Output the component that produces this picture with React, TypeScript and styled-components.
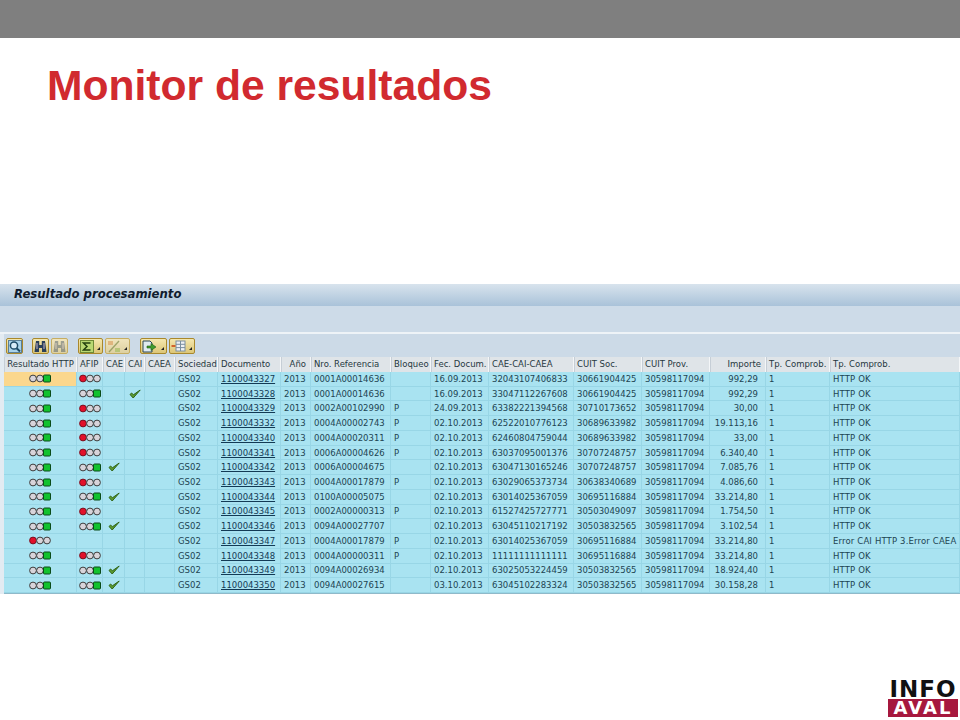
import React from "react";
import styled, { createGlobalStyle } from "styled-components";

const Global = createGlobalStyle`
  html, body { margin: 0; padding: 0; background: #fff; }
  body { font-family: "Liberation Sans", Arial, sans-serif; }
`;

const Page = styled.div`
  width: 960px;
  height: 720px;
  display: flex;
  flex-direction: column;
  overflow: hidden;
  background: #fff;
`;
const TopBar = styled.div`
  height: 38px;
  flex: none;
  background: #7f7f7f;
`;
const Title = styled.h1`
  margin: 0;
  flex: none;
  height: 246px;
  box-sizing: border-box;
  padding: 22px 0 0 47px;
  font: bold 42.6px/50px "Liberation Sans", Arial, sans-serif;
  color: #d12a2f;
`;
const Panel = styled.section`
  flex: none;
  display: flex;
  flex-direction: column;
  border-left: 4px solid #e3ebf2;
`;
const PanelTitle = styled.div`
  height: 22px;
  margin-left: -4px;
  padding: 0 0 2px 14px;
  box-sizing: border-box;
  display: flex;
  align-items: center;
  background: linear-gradient(#d8e3ed, #a9c2d9);
  font: italic bold 11.7px "DejaVu Sans", sans-serif;
  color: #101c2e;
`;
const Band = styled.div`
  height: 26px;
  margin-left: -4px;
  background: #cddbe8;
  border-bottom: 2px solid #eef3f7;
`;
const Toolbar = styled.div`
  height: 23px;
  box-sizing: border-box;
  padding: 4px 0 0;
  display: flex;
  align-items: flex-start;
  background: #ccdae7;
`;
const ToolButton = styled.div<{ $w: number; $faded?: boolean; $gap?: number }>`
  width: ${(p) => p.$w}px;
  height: 16px;
  margin-left: ${(p) => p.$gap ?? 2}px;
  box-sizing: border-box;
  display: flex;
  align-items: center;
  padding-left: 1px;
  position: relative;
  border: 1px solid ${(p) => (p.$faded ? "#c6ad62" : "#a9882c")};
  border-radius: 2px;
  background: ${(p) => (p.$faded ? "linear-gradient(#f0e5bd,#ddd0a0)" : "linear-gradient(#f4e7ae,#dcc677)")};
`;
const DropMark = styled.span`
  position: absolute;
  right: 2px;
  bottom: 3px;
  width: 0;
  height: 0;
  border-left: 3px solid transparent;
  border-bottom: 3px solid #222;
`;
const COLS =
  "73px 26px 22px 20px 30px 43px 63px 30px 80px 40px 58px 85px 68px 68px 56px 64px 1fr";
const HeaderRow = styled.div`
  height: 15px;
  display: grid;
  grid-template-columns: ${COLS};
  background: #dfe4e8;
`;
const HeaderCell = styled.div<{ $right?: boolean; $center?: boolean }>`
  box-sizing: border-box;
  padding: 0 ${(p) => (p.$right ? 4 : 2)}px 0 2px;
  border-right: 1px solid #f4f6f8;
  border-left: 1px solid #c6ced6;
  font: 8.5px/14px "DejaVu Sans", sans-serif;
  color: #26383f;
  white-space: nowrap;
  overflow: hidden;
  text-align: ${(p) => (p.$right ? "right" : p.$center ? "center" : "left")};
`;
const Rows = styled.div`
  height: 221px;
  display: flex;
  flex-direction: column;
  border-bottom: 1px solid #8fb9c9;
`;
const Row = styled.div`
  flex: 1;
  min-height: 0;
  display: grid;
  grid-template-columns: ${COLS};
  background: #a9e3f1;
`;
const Cell = styled.div<{ $right?: boolean; $first?: boolean }>`
  box-sizing: border-box;
  padding: 0 ${(p) => (p.$right ? 7 : 2)}px 0 3px;
  display: flex;
  align-items: center;
  justify-content: ${(p) => (p.$right ? "flex-end" : "flex-start")};
  border-right: 1px solid #98d6e6;
  border-bottom: 1px solid #98d6e6;
  font: 8.5px "DejaVu Sans", sans-serif;
  color: #1d4452;
  white-space: nowrap;
  background: ${(p) => (p.$first ? "#fbd78d" : "transparent")};
`;
const IconCell = styled(Cell)`
  padding: 0;
  justify-content: center;
`;
const MessageCell = styled(Cell)`
  letter-spacing: 0.15px;
`;
const DocLink = styled.span`
  color: #123a55;
  text-decoration: underline;
`;
const Footer = styled.div`
  flex: 1;
  display: flex;
  justify-content: flex-end;
  align-items: flex-end;
  padding: 0 2px 3px 0;
`;
const Logo = styled.div`
  width: 70px;
  display: flex;
  flex-direction: column;
  align-items: stretch;
`;
const LogoTop = styled.div`
  font: bold 23px/18px "DejaVu Sans", sans-serif;
  height: 18px;
  margin-bottom: 1px;
  color: #111;
  text-align: center;
  letter-spacing: 1px;
`;
const LogoBottom = styled.div`
  height: 18px;
  background: #a6183e;
  color: #fff;
  font: bold 18px/18px "DejaVu Sans", sans-serif;
  letter-spacing: 2px;
  text-align: center;
`;

type L = "g" | "r" | "";
const Light = ({ s }: { s: L }) =>
  !s ? null : (
    <svg width="22" height="9" viewBox="0 0 22 9">
      <circle cx="4" cy="4.5" r="3.4" fill={s === "r" ? "#e2102a" : "#d8d4da"} stroke={s === "r" ? "#7a1020" : "#3c3c3c"} strokeWidth="1" />
      <circle cx="11" cy="4.5" r="3.4" fill="#d8d4da" stroke="#3c3c3c" strokeWidth="1" />
      {s === "g" ? (
        <rect x="14.5" y="1" width="7" height="7" rx="1" fill="#12c22e" stroke="#0b4a18" strokeWidth="1" />
      ) : (
        <circle cx="18" cy="4.5" r="3.4" fill="#d8d4da" stroke="#3c3c3c" strokeWidth="1" />
      )}
    </svg>
  );
const Check = () => (
  <svg width="12" height="10" viewBox="0 0 12 10">
    <path d="M1 5.5 L4.2 9 L11.2 1 L4.4 5.8 L2.6 4 Z" fill="#5c9a30" stroke="#2f6416" strokeWidth="1" strokeLinejoin="round" />
  </svg>
);
const Mag = () => (
  <svg width="14" height="13" viewBox="0 0 14 13">
    <rect x="0.5" y="0.5" width="13" height="12" fill="#a8d2ea" stroke="#5b7f96" />
    <circle cx="6" cy="5.5" r="3.6" fill="#d8ecf8" stroke="#1d4a66" strokeWidth="1.5" />
    <path d="M8.6 8.2 L12 11.5" stroke="#1d4a66" strokeWidth="2" />
  </svg>
);
const Bino = ({ faded }: { faded?: boolean }) => (
  <svg width="13" height="13" viewBox="0 0 13 13" opacity={faded ? 0.4 : 1}>
    <path d="M2 1h3.2v4h2.6V1H11l1.5 11H8V8H5v4H.5z" fill="#2a3f58" />
    <path d="M3 3v6M10 3v6" stroke="#c9b7c8" strokeWidth="1" />
  </svg>
);
const Sigma = () => (
  <svg width="14" height="13" viewBox="0 0 14 13">
    <rect x="0.5" y="0.5" width="13" height="12" fill="#b9d872" stroke="#6f8a36" />
    <path d="M10.5 3H3.5L7 6.5L3.5 10H10.5" fill="none" stroke="#24420f" strokeWidth="1.5" />
  </svg>
);
const Percent = () => (
  <svg width="14" height="13" viewBox="0 0 14 13" opacity="0.6">
    <path d="M2 12 L12 1" stroke="#6d7f3a" strokeWidth="1.3" />
    <rect x="1" y="1" width="5" height="4" fill="#d99a5c" />
    <rect x="8" y="8" width="5" height="4" fill="#9dbb5a" />
  </svg>
);
const Export = () => (
  <svg width="15" height="13" viewBox="0 0 15 13">
    <path d="M1 1h7l2 2v9H1z" fill="#dfeaf0" stroke="#2a4658" />
    <path d="M5 6h4V3.5L14 7 9 10.5V8H5z" fill="#3f9c2c" stroke="#1e5a14" strokeWidth="0.6" />
  </svg>
);
const Layout = () => (
  <svg width="15" height="12" viewBox="0 0 15 12">
    <rect x="5" y="1" width="9" height="10" fill="#eef1f4" stroke="#7a8ea0" />
    <path d="M5 4.3h9M5 7.6h9M9.5 1v10" stroke="#7a8ea0" />
    <path d="M0.5 6h4" stroke="#d2632a" strokeWidth="2" />
  </svg>
);

const heads: [string, boolean?][] = [
  ["Resultado HTTP"], ["AFIP"], ["CAE"], ["CAI"], ["CAEA"], ["Sociedad"], ["Documento"], ["Año", true],
  ["Nro. Referencia"], ["Bloqueo"], ["Fec. Docum."], ["CAE-CAI-CAEA"], ["CUIT Soc."], ["CUIT Prov."],
  ["Importe", true], ["Tp. Comprob."], ["Tp. Comprob."],
];

type R = [L, L, "" | "cae" | "cai", string, string, string, string, string, string, string, string];
const OK = "HTTP OK";
const data: R[] = [
  ["g", "r", "", "1100043327", "0001A00014636", "", "16.09.2013", "32043107406833", "30661904425", "992,29", OK],
  ["g", "g", "cai", "1100043328", "0001A00014636", "", "16.09.2013", "33047112267608", "30661904425", "992,29", OK],
  ["g", "r", "", "1100043329", "0002A00102990", "P", "24.09.2013", "63382221394568", "30710173652", "30,00", OK],
  ["g", "r", "", "1100043332", "0004A00002743", "P", "02.10.2013", "62522010776123", "30689633982", "19.113,16", OK],
  ["g", "r", "", "1100043340", "0004A00020311", "P", "02.10.2013", "62460804759044", "30689633982", "33,00", OK],
  ["g", "r", "", "1100043341", "0006A00004626", "P", "02.10.2013", "63037095001376", "30707248757", "6.340,40", OK],
  ["g", "g", "cae", "1100043342", "0006A00004675", "", "02.10.2013", "63047130165246", "30707248757", "7.085,76", OK],
  ["g", "r", "", "1100043343", "0004A00017879", "P", "02.10.2013", "63029065373734", "30638340689", "4.086,60", OK],
  ["g", "g", "cae", "1100043344", "0100A00005075", "", "02.10.2013", "63014025367059", "30695116884", "33.214,80", OK],
  ["g", "r", "", "1100043345", "0002A00000313", "P", "02.10.2013", "61527425727771", "30503049097", "1.754,50", OK],
  ["g", "g", "cae", "1100043346", "0094A00027707", "", "02.10.2013", "63045110217192", "30503832565", "3.102,54", OK],
  ["r", "", "", "1100043347", "0004A00017879", "P", "02.10.2013", "63014025367059", "30695116884", "33.214,80", "Error CAI HTTP 3.Error CAEA"],
  ["g", "r", "", "1100043348", "0004A00000311", "P", "02.10.2013", "11111111111111", "30695116884", "33.214,80", OK],
  ["g", "g", "cae", "1100043349", "0094A00026934", "", "02.10.2013", "63025053224459", "30503832565", "18.924,40", OK],
  ["g", "g", "cae", "1100043350", "0094A00027615", "", "03.10.2013", "63045102283324", "30503832565", "30.158,28", OK],
];

export default function App() {
  return (
    <Page>
      <Global />
      <TopBar />
      <Title>Monitor de resultados</Title>
      <Panel>
        <PanelTitle>Resultado procesamiento</PanelTitle>
        <Band />
        <Toolbar>
          <ToolButton $w={17}><Mag /></ToolButton>
          <ToolButton $w={17} $gap={9}><Bino /></ToolButton>
          <ToolButton $w={17} $faded><Bino faded /></ToolButton>
          <ToolButton $w={25} $gap={10}><Sigma /><DropMark /></ToolButton>
          <ToolButton $w={25} $faded><Percent /><DropMark /></ToolButton>
          <ToolButton $w={27} $gap={10}><Export /><DropMark /></ToolButton>
          <ToolButton $w={26}><Layout /><DropMark /></ToolButton>
        </Toolbar>
        <HeaderRow>
          {heads.map(([h, right], i) => (
            <HeaderCell key={i} $right={right} $center={i === 0}>{h}</HeaderCell>
          ))}
        </HeaderRow>
        <Rows>
          {data.map((r, i) => (
            <Row key={i}>
              <IconCell $first={i === 0}><Light s={r[0]} /></IconCell>
              <IconCell><Light s={r[1]} /></IconCell>
              <IconCell>{r[2] === "cae" && <Check />}</IconCell>
              <IconCell>{r[2] === "cai" && <Check />}</IconCell>
              <Cell />
              <Cell>GS02</Cell>
              <Cell><DocLink>{r[3]}</DocLink></Cell>
              <Cell>2013</Cell>
              <Cell>{r[4]}</Cell>
              <Cell>{r[5]}</Cell>
              <Cell>{r[6]}</Cell>
              <Cell>{r[7]}</Cell>
              <Cell>{r[8]}</Cell>
              <Cell>30598117094</Cell>
              <Cell $right>{r[9]}</Cell>
              <Cell>1</Cell>
              <MessageCell>{r[10]}</MessageCell>
            </Row>
          ))}
        </Rows>
      </Panel>
      <Footer>
        <Logo>
          <LogoTop>INFO</LogoTop>
          <LogoBottom>AVAL</LogoBottom>
        </Logo>
      </Footer>
    </Page>
  );
}
